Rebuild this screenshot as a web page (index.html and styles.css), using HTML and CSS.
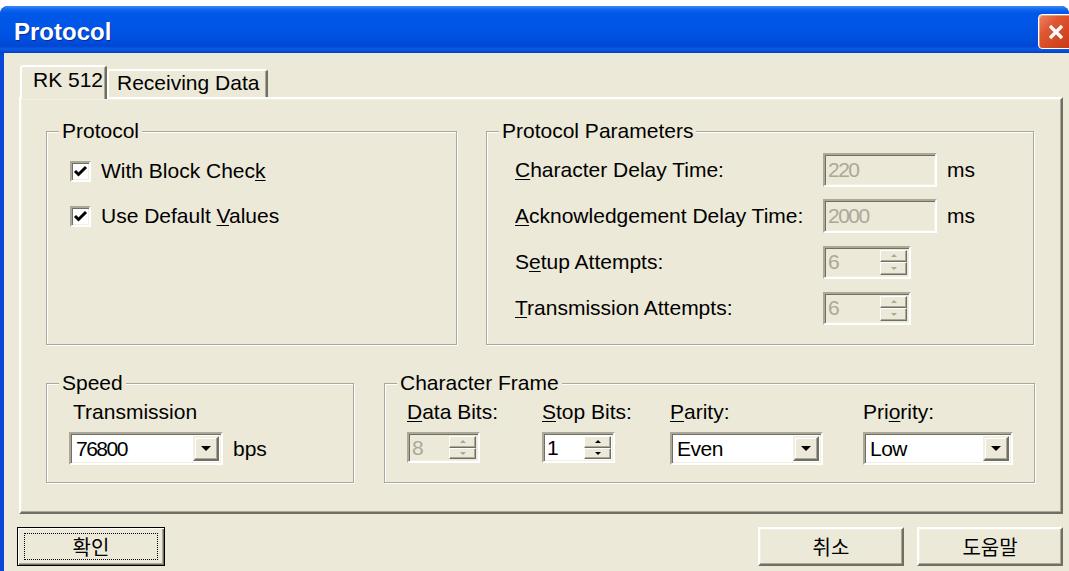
FILE: index.html
```html
<!DOCTYPE html>
<html lang="ko">
<head>
<meta charset="utf-8">
<title>Protocol</title>
<link rel="stylesheet" href="styles.css">
</head>
<body>
<div class="window">
  <div class="titlebar">
    <span class="title">Protocol</span>
    <div class="close">
      <svg width="20" height="20" viewBox="0 0 20 20"><path d="M4 4L16 16M16 4L4 16" stroke="#fff" stroke-width="3.2"/></svg>
    </div>
  </div>
  <div class="client">
    <div class="tabs">
      <div class="tab active">RK 512</div>
      <div class="tab">Receiving Data</div>
    </div>
    <div class="panel">
      <div class="row">
        <fieldset class="group protocol">
          <legend>Protocol</legend>
          <div class="group-body checks">
            <label class="check-row"><span class="checkbox"><svg width="15" height="15" viewBox="0 0 15 15"><path d="M2 7l3.5 3.5L13 3" fill="none" stroke="#000" stroke-width="3"/></svg></span><span>With Block Chec<u>k</u></span></label>
            <label class="check-row"><span class="checkbox"><svg width="15" height="15" viewBox="0 0 15 15"><path d="M2 7l3.5 3.5L13 3" fill="none" stroke="#000" stroke-width="3"/></svg></span><span>Use Default <u>V</u>alues</span></label>
          </div>
        </fieldset>
        <fieldset class="group params">
          <legend>Protocol Parameters</legend>
          <div class="group-body param-list">
            <div class="param-row">
              <span class="param-label"><u>C</u>haracter Delay Time:</span>
              <div class="field disabled text-field"><span class="value">220</span></div>
              <span class="unit">ms</span>
            </div>
            <div class="param-row">
              <span class="param-label"><u>A</u>cknowledgement Delay Time:</span>
              <div class="field disabled text-field"><span class="value">2000</span></div>
              <span class="unit">ms</span>
            </div>
            <div class="param-row">
              <span class="param-label">S<u>e</u>tup Attempts:</span>
              <div class="field disabled spin-field">
                <span class="value">6</span>
                <div class="spin-btns"><span class="spin-btn"><i class="up"></i></span><span class="spin-btn"><i class="down"></i></span></div>
              </div>
            </div>
            <div class="param-row">
              <span class="param-label"><u>T</u>ransmission Attempts:</span>
              <div class="field disabled spin-field">
                <span class="value">6</span>
                <div class="spin-btns"><span class="spin-btn"><i class="up"></i></span><span class="spin-btn"><i class="down"></i></span></div>
              </div>
            </div>
          </div>
        </fieldset>
      </div>
      <div class="row second">
        <fieldset class="group speed">
          <legend>Speed</legend>
          <div class="group-body">
            <div class="speed-label">Transmission</div>
            <div class="speed-row">
              <div class="field combo speed-combo"><span class="value">76800</span><span class="drop"><i></i></span></div>
              <span class="unit">bps</span>
            </div>
          </div>
        </fieldset>
        <fieldset class="group frame">
          <legend>Character Frame</legend>
          <div class="group-body frame-grid">
            <span><u>D</u>ata Bits:</span>
            <span><u>S</u>top Bits:</span>
            <span><u>P</u>arity:</span>
            <span>Pri<u>o</u>rity:</span>
            <div class="field disabled spin-field small">
              <span class="value">8</span>
              <div class="spin-btns"><span class="spin-btn"><i class="up"></i></span><span class="spin-btn"><i class="down"></i></span></div>
            </div>
            <div class="field spin-field small">
              <span class="value">1</span>
              <div class="spin-btns"><span class="spin-btn"><i class="up"></i></span><span class="spin-btn"><i class="down"></i></span></div>
            </div>
            <div class="field combo parity"><span class="value">Even</span><span class="drop"><i></i></span></div>
            <div class="field combo priority"><span class="value">Low</span><span class="drop"><i></i></span></div>
          </div>
        </fieldset>
      </div>
    </div>
    <div class="buttons">
      <button class="btn default"><span class="focus">확인</span></button>
      <span class="spacer"></span>
      <button class="btn">취소</button>
      <button class="btn">도움말</button>
    </div>
  </div>
</div>
</body>
</html>
```
FILE: styles.css
```css
* { box-sizing: border-box; }

html, body { margin: 0; }

body {
  width: 1069px;
  height: 571px;
  overflow: hidden;
  background: #fff;
  font-family: "Liberation Sans", Arial, sans-serif;
  font-size: 21px;
  color: #000;
}

u { text-underline-offset: 2px; text-decoration-thickness: 1px; }

/* window frame */
.window {
  margin-top: 6px;
  height: 565px;
  background: #0A46DA;
  border-radius: 8px 8px 0 0;
  display: flex;
  flex-direction: column;
  overflow: hidden;
}

.titlebar {
  flex: none;
  height: 47px;
  padding: 4px 0 0 14px;
  display: flex;
  align-items: center;
  background: linear-gradient(#3C8CF8 0, #1469F0 3px, #0058E8 7px, #0056E6 20px, #0050DE 34px, #0046D2 40px, #0F5BE6 43px, #0040C4 47px);
}

.title {
  flex: 1;
  color: #fff;
  font-weight: bold;
  font-size: 24px;
  text-shadow: 1px 1px 0 #0B2C9C;
}

.close {
  width: 35px;
  height: 35px;
  margin-right: -4px;
  border: 1px solid #fff;
  border-radius: 4px;
  background: linear-gradient(135deg, #EE8462 0%, #DE5631 35%, #D2461F 70%, #C23B17 100%);
  box-shadow: inset 1px 1px 0 rgba(255,255,255,0.35);
  display: flex;
  align-items: center;
  justify-content: center;
}

.client {
  flex: 1;
  margin-left: 4px;
  background: #ECE9D8;
  padding: 12px 6px 0 13px;
  display: flex;
  flex-direction: column;
}

/* tab strip */
.tabs {
  height: 32px;
  margin-left: 3px;
  display: flex;
  align-items: flex-end;
}

.tab {
  height: 28px;
  width: 161px;
  padding-left: 8px;
  background: #ECE9D8;
  border: 2px solid;
  border-color: #fff #716F64 transparent #fff;
  border-bottom: none;
  border-radius: 3px 3px 0 0;
  box-shadow: inset -1px 0 0 #ACA899;
  line-height: 24px;
}

.tab.active {
  position: relative;
  z-index: 1;
  width: 87px;
  height: 34px;
  margin-bottom: -2px;
  padding-left: 11px;
  line-height: 26px;
}

.panel {
  margin-left: 2px;
  height: 417px;
  border: 2px solid;
  border-color: #fff #716F64 #716F64 #fff;
  box-shadow: inset -1px -1px 0 #ACA899, inset 1px 1px 0 #F1EFE2;
  padding: 20px 26px 0 25px;
  display: flex;
  flex-direction: column;
  gap: 26px;
}

.row { display: flex; gap: 29px; }
.row.second { gap: 30px; }

/* etched group boxes */
.group {
  margin: 0;
  padding: 0;
  min-width: 0;
  border: 1px solid #ACA899;
  box-shadow: inset 1px 1px 0 #fff, 1px 1px 0 #fff;
}

.group legend {
  margin-left: 12px;
  padding: 0 3px;
  line-height: 24px;
  background: #ECE9D8;
}

.protocol { width: 411px; height: 226px; }
.params { width: 548px; height: 226px; }
.speed { width: 308px; height: 112px; }
.frame { width: 651px; height: 112px; }

/* checkboxes */
.checks { padding: 16px 0 0 23px; display: flex; flex-direction: column; gap: 21px; }

.check-row { display: flex; align-items: center; gap: 10px; height: 24px; }

.checkbox {
  width: 21px;
  height: 21px;
  border: 2px solid;
  border-color: #ACA899 #fff #fff #ACA899;
  box-shadow: inset 1px 1px 0 #716F64, inset -1px -1px 0 #F1EFE2;
  background: #fff;
  display: flex;
  align-items: center;
  justify-content: center;
}

/* parameter rows */
.param-list { padding: 10px 0 0 28px; display: flex; flex-direction: column; gap: 12px; }

.param-row { display: flex; align-items: center; height: 34px; }

.param-label { width: 308px; }

.unit { margin-left: 10px; }

/* sunken edit fields */
.field {
  height: 34px;
  border: 2px solid;
  border-color: #ACA899 #fff #fff #ACA899;
  box-shadow: inset 1px 1px 0 #716F64, inset -1px -1px 0 #F1EFE2;
  background: #fff;
  display: flex;
  align-items: stretch;
  padding: 2px;
}

.field.disabled { background: #ECE9D8; color: #ACA899; }

.value {
  flex: 1;
  padding-left: 1px;
  display: flex;
  align-items: center;
  font-size: 21px;
  letter-spacing: -1.5px;
}

.text-field { width: 114px; }
.spin-field { width: 88px; height: 33px; }
.spin-field.small { width: 73px; height: 31px; }

.spin-btns { width: 27px; display: flex; flex-direction: column; }

.spin-btn {
  flex: 1;
  background: #ECE9D8;
  border: 1px solid;
  border-color: #fff #716F64 #716F64 #fff;
  box-shadow: inset -1px -1px 0 #ACA899;
  display: flex;
  align-items: center;
  justify-content: center;
}

.spin-btn i { width: 0; height: 0; border-left: 3px solid transparent; border-right: 3px solid transparent; }
.spin-btn i.up { border-bottom: 3px solid #000; }
.spin-btn i.down { border-top: 3px solid #000; }
.disabled .spin-btn i.up { border-bottom-color: #ACA899; }
.disabled .spin-btn i.down { border-top-color: #ACA899; }

/* drop-down combos */
.combo { height: 33px; }
.combo .value { padding-left: 3px; letter-spacing: -0.5px; }
.speed-combo .value { letter-spacing: -1.5px; }

.drop {
  width: 26px;
  background: #ECE9D8;
  border: 2px solid;
  border-color: #F1EFE2 #716F64 #716F64 #F1EFE2;
  box-shadow: inset -1px -1px 0 #ACA899, inset 1px 1px 0 #fff;
  display: flex;
  align-items: center;
  justify-content: center;
}

.drop i { width: 0; height: 0; border-left: 5px solid transparent; border-right: 5px solid transparent; border-top: 5px solid #000; }

.speed .group-body { padding: 5px 0 0 22px; }
.speed-label { padding-left: 4px; line-height: 24px; }
.speed-row { margin-top: 8px; display: flex; align-items: center; }
.speed-combo { width: 154px; }

.frame-grid {
  padding: 5px 0 0 22px;
  display: grid;
  grid-template-columns: 135px 128px 193px auto;
  grid-template-rows: 24px auto;
  row-gap: 8px;
  justify-items: start;
}

.parity { width: 153px; }
.priority { width: 150px; }

/* dialog buttons */
.buttons {
  margin-top: 13px;
  display: flex;
  gap: 13px;
}

.spacer { flex: 1; }

.btn {
  width: 146px;
  height: 39px;
  padding: 0;
  background: #ECE9D8;
  border: 2px solid;
  border-color: #fff #716F64 #716F64 #fff;
  box-shadow: inset -1px -1px 0 #ACA899, inset 1px 1px 0 #F1EFE2;
  font-family: "Noto Sans CJK KR", sans-serif;
  font-size: 20px;
  color: #000;
}

.btn.default {
  width: 148px;
  border: 1px solid #000;
  box-shadow: inset 1px 1px 0 #fff, inset -1px -1px 0 #716F64, inset -2px -2px 0 #ACA899;
  display: flex;
  padding: 5px 6px 5px 6px;
}

.focus {
  flex: 1;
  border: 1px dotted #000;
  display: flex;
  align-items: center;
  justify-content: center;
}
```
